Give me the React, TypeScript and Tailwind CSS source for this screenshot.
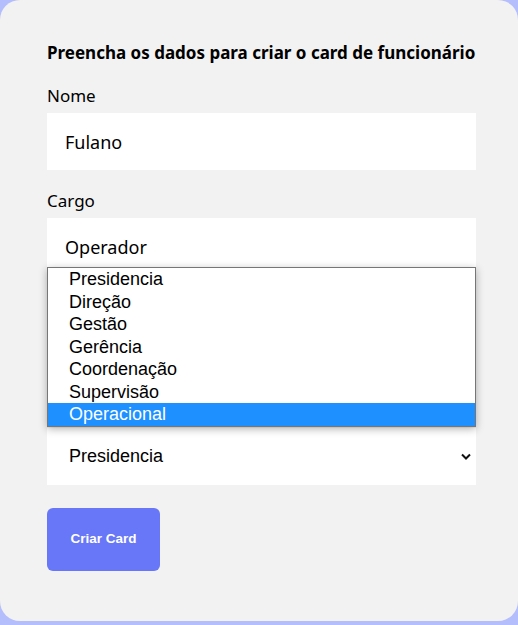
import { useState } from "react";

const CARGOS = ["Presidencia", "Direção", "Gestão", "Gerência", "Coordenação", "Supervisão", "Operacional"];

export default function App() {
  const [nome, setNome] = useState("Fulano");
  const [cargo, setCargo] = useState("Operador");
  const [nivel] = useState("Presidencia");

  const labelCls = "block text-[17px] leading-[22px] text-black";
  const inputCls =
    "mt-[6px] block w-full h-[57px] bg-white px-[18px] text-[18px] text-black outline-none border-0";

  return (
    <div className="min-h-screen bg-[#b4befc] pb-[4px]" style={{ fontFamily: '"Noto Sans", "Open Sans", sans-serif' }}>
      <div className="bg-[#f2f2f2] rounded-[20px] pl-[47px] pr-[42px] pt-[42px] pb-[50px]">
        <h2 className="text-[17px] leading-[22px] font-bold text-black">
          Preencha os dados para criar o card de funcionário
        </h2>

        <div className="mt-[21px]">
          <label className={labelCls}>Nome</label>
          <input className={inputCls} value={nome} onChange={(e) => setNome(e.target.value)} />
        </div>

        <div className="mt-[20px]">
          <label className={labelCls}>Cargo</label>
          <input className={inputCls} value={cargo} onChange={(e) => setCargo(e.target.value)} />
        </div>

        {/* campo coberto pela lista aberta */}
        <div className="mt-[20px] invisible">
          <label className={labelCls}>Email</label>
          <input className={inputCls} defaultValue="" />
        </div>

        <div className="mt-[20px]">
          <label className={labelCls + " invisible"}>Nível</label>
          <div className="relative mt-[6px]">
            <div
              className="flex items-center justify-between h-[57px] bg-white pl-[22px] pr-[5px] text-[18px] text-black"
              style={{ fontFamily: '"Liberation Sans", Arial, sans-serif' }}
            >
              <span>{nivel}</span>
              <svg width="10" height="7" viewBox="0 0 10 7">
                <path d="M1 1.5 L5 5.5 L9 1.5" fill="none" stroke="#111" strokeWidth="2" />
              </svg>
            </div>

            {/* lista aberta do select */}
            <ul
              className="absolute left-0 right-0 top-[-161px] bg-white border border-[#767676] shadow-[0_2px_8px_rgba(0,0,0,0.3)] text-[18px] leading-[22.5px] text-black"
              style={{ fontFamily: '"Liberation Sans", Arial, sans-serif' }}
            >
              {CARGOS.map((c) => (
                <li
                  key={c}
                  className={
                    c === "Operacional"
                      ? "pl-[21px] h-[22.5px] bg-[#1e90ff] text-white"
                      : "pl-[21px] h-[22.5px]"
                  }
                >
                  {c}
                </li>
              ))}
            </ul>
          </div>
        </div>

        <button
          className="mt-[23px] w-[113px] h-[63px] rounded-[6px] bg-[#6777f7] text-white text-[13.5px] font-bold"
          style={{ fontFamily: '"Liberation Sans", Arial, sans-serif' }}
        >
          Criar Card
        </button>
      </div>
    </div>
  );
}
